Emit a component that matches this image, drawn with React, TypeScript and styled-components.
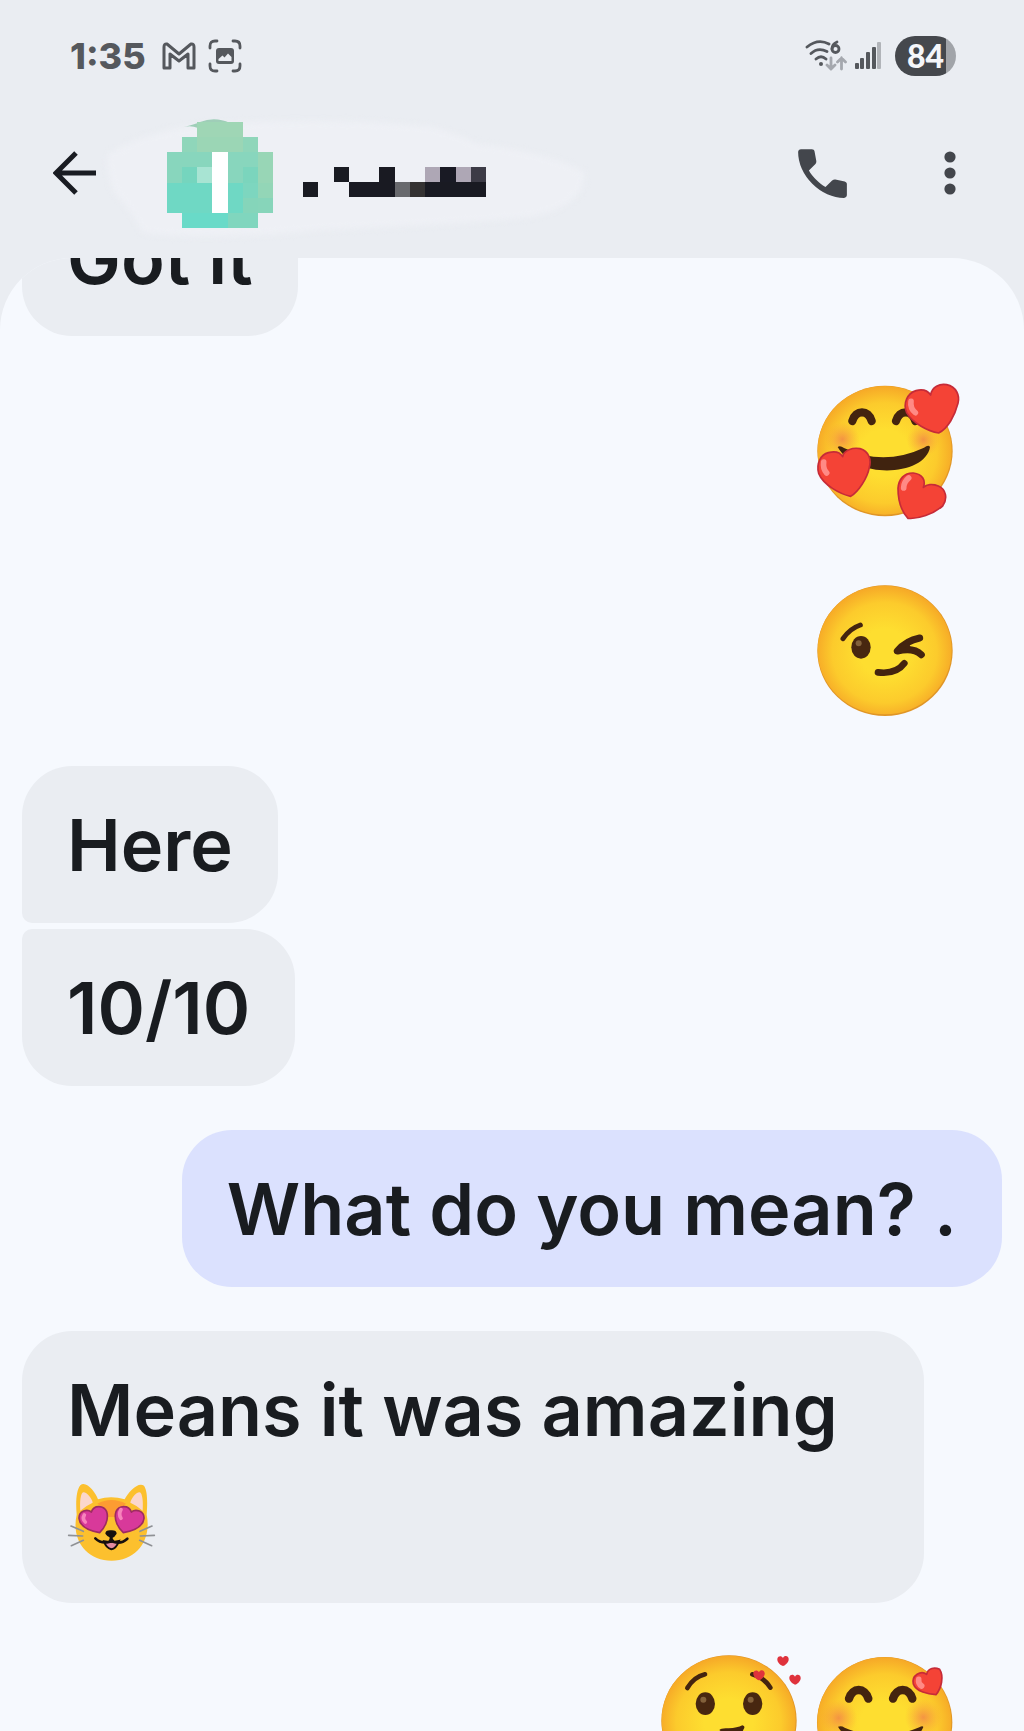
import React from "react";
import styled, { createGlobalStyle } from "styled-components";

const GlobalStyle = createGlobalStyle`
  * { box-sizing: border-box; }
  body { margin: 0; background: #eaedf2; }
`;

const Screen = styled.div`
  display: flex;
  flex-direction: column;
  height: 100vh;
  overflow: hidden;
  background: #eaedf2;
  color: #191c20;
  font-family: Inter, "Liberation Sans", sans-serif;
`;

const StatusBar = styled.div`
  display: flex;
  flex: none;
  align-items: center;
  justify-content: space-between;
  height: 112px;
  padding: 0 68px 0 70px;
  color: #55585d;
`;

const StatusGroup = styled.div<{ $gap: number }>`
  display: flex;
  align-items: center;
  gap: ${(p) => p.$gap}px;
`;

const Clock = styled.time`
  font-size: 36px;
  font-weight: 800;
  line-height: 40px;
  margin-right: 4px;
`;

const Battery = styled.span`
  display: flex;
  align-items: center;
  justify-content: center;
  width: 61px;
  height: 40px;
  margin-left: 6px;
  border-radius: 20px;
  background: linear-gradient(to right, #45484d 51px, #a1a4a9 51px);
  color: #f4f6fa;
  font-family: Lato, "Liberation Sans", sans-serif;
  font-size: 32px;
  font-weight: 900;
  line-height: 40px;
`;

const Icon = styled.svg`
  display: block;
  flex: none;
`;

const AppBar = styled.header`
  position: relative;
  display: flex;
  flex: none;
  align-items: center;
  height: 122px;
  margin-bottom: 24px;
  padding: 0 42px 0 43px;
`;

const Smudge = styled.svg`
  position: absolute;
  left: 100px;
  top: 0;
  overflow: visible;
  filter: blur(3px);
`;

const IconButton = styled.button`
  position: relative;
  display: flex;
  align-items: center;
  justify-content: center;
  width: 64px;
  height: 64px;
  padding: 0;
  border: 0;
  background: none;
  color: #43464c;
`;

const Contact = styled.div`
  position: relative;
  display: flex;
  flex: 1;
  align-items: center;
  gap: 30px;
  padding-left: 60px;
`;

const NameLine = styled.div`
  padding-top: 18px;
`;

const Actions = styled.div`
  display: flex;
  gap: 64px;
`;

const Sheet = styled.main`
  flex: 1;
  min-height: 0;
  overflow: hidden;
  border-radius: 72px 72px 0 0;
  background: #f6f9fe;
`;

const Thread = styled.div`
  display: flex;
  flex-direction: column;
  gap: 44px;
  margin-top: -79px;
  padding: 0 22px;
`;

const Group = styled.section<{ $sent?: boolean; $gap?: number }>`
  display: flex;
  flex-direction: column;
  align-items: ${(p) => (p.$sent ? "flex-end" : "flex-start")};
  gap: ${(p) => p.$gap ?? 6}px;
`;

const Bubble = styled.p<{ $sent?: boolean; $first?: boolean; $last?: boolean }>`
  max-width: 92%;
  margin: 0;
  padding: 21px 45px;
  border-radius: 50px;
  ${(p) => p.$first && "border-bottom-left-radius: 10px;"}
  ${(p) => p.$last && "border-top-left-radius: 10px;"}
  background: ${(p) => (p.$sent ? "#dbe1fe" : "#eaedf2")};
  font-size: 72px;
  font-weight: 600;
  line-height: 115px;
`;

const EmojiRow = styled.div`
  display: flex;
  padding-right: 39px;
`;

const Emoji = styled.svg`
  display: block;
  width: 155px;
  height: 142px;
`;

const InlineEmoji = styled.svg`
  width: 90px;
  height: 84px;
  vertical-align: -12px;
`;

const Defs = styled.svg`
  position: absolute;
`;

const INK = "#44240f";

function FaceGradients() {
  return (
    <Defs width="0" height="0" aria-hidden="true">
      <defs>
        <radialGradient id="face" cx="50%" cy="52%" r="52%">
          <stop offset="0.35" stopColor="#fede30" />
          <stop offset="0.75" stopColor="#fccb2c" />
          <stop offset="1" stopColor="#f6a827" />
        </radialGradient>
        <radialGradient id="blush">
          <stop offset="0" stopColor="#f07a4c" stopOpacity="0.7" />
          <stop offset="1" stopColor="#f99a3c" stopOpacity="0" />
        </radialGradient>
      </defs>
    </Defs>
  );
}

function Face({ cx, cy }: { cx: number; cy: number }) {
  return (
    <>
      <ellipse cx={cx} cy={cy} rx="203" ry="196" fill="#e09626" />
      <ellipse cx={cx - 1} cy={cy - 2} rx="201" ry="193" fill="url(#face)" />
    </>
  );
}

function Heart({ d, shine }: { d: string; shine: string }) {
  return (
    <>
      <path d={d} fill="#f44336" stroke="#c62b38" strokeWidth="5" strokeLinejoin="round" />
      <path d={shine} fill="none" stroke="#ff8a85" strokeWidth="17" strokeLinecap="round" />
    </>
  );
}

function ArchedEyes({ x, gap, y }: { x: number; gap: number; y: number }) {
  const arch = "c5-18 17-26 29-26s24 8 29 26";
  return (
    <path
      d={`M${x} ${y}${arch}M${x + gap} ${y}${arch}`}
      fill="none"
      stroke={INK}
      strokeWidth="25"
      strokeLinecap="round"
    />
  );
}

function SmilingHearts() {
  return (
    <Emoji viewBox="54 60 465 426" role="img" aria-label="Smiling face with hearts">
      <Face cx={285} cy={273} />
      <circle cx="157" cy="238" r="52" fill="url(#blush)" />
      <circle cx="400" cy="240" r="50" fill="url(#blush)" />
      <ArchedEyes x={187} gap={131} y={183} />
      <path d="M143 261Q150 255 162 264Q280 320 402 263Q416 253 420 261C408 345 204 364 143 261Z" fill="#40230f" />
      <Heart d="M422 105C425 80 450 70 470 74C500 80 510 108 504 130C495 165 475 205 446 219C415 214 368 190 350 158C338 130 352 100 378 92C400 86 415 95 422 105Z" shine="M363 124Q360 145 376 158" />
      <Heart d="M158 290C160 270 190 262 210 266C238 274 244 300 238 322C232 355 205 395 182 409C150 402 100 375 86 340C78 310 92 284 115 278C138 272 152 280 158 290Z" shine="M101 306Q98 326 110 339" />
      <Heart d="M400 382C408 362 398 342 370 339C342 338 326 358 324 385C324 420 335 455 354 475C385 478 430 462 458 438C474 415 468 388 445 378C428 371 410 373 400 382Z" shine="M356 354Q341 366 341 384" />
    </Emoji>
  );
}

function Wink() {
  return (
    <Emoji viewBox="54 60 465 426" role="img" aria-label="Winking face">
      <Face cx={285} cy={272} />
      <g fill="none" stroke={INK} strokeLinecap="round" strokeLinejoin="round">
        <path d="M159 236Q179 206 211 195" strokeWidth="15" />
        <path d="M389 234Q348 242 322 273Q370 261 394 284" strokeWidth="21" />
        <path d="M318 275L350 250L358 267Z" fill={INK} strokeWidth="12" />
        <path d="M264 337Q318 344 343 310" strokeWidth="20" />
      </g>
      <ellipse cx="213" cy="262" rx="29" ry="34" fill="#482710" />
      <circle cx="206" cy="250" r="9" fill="#83613b" />
    </Emoji>
  );
}

const TINY_HEART = "M0-7C4-17 19-14 17-1C15 9 5 16 0 17C-9 14-18 5-17-5C-14-15-4-14 0-7Z";

function FloatingHearts() {
  return (
    <Emoji viewBox="39 51 465 426" role="img" aria-label="Face with floating hearts">
      <Face cx={267} cy={272} />
      <g fill="none" stroke={INK} strokeWidth="14" strokeLinecap="round">
        <path d="M142 174Q162 141 195 133" />
        <path d="M337 133Q374 144 391 173" />
      </g>
      <ellipse cx="196" cy="221" rx="29" ry="34" fill="#482710" />
      <ellipse cx="338" cy="221" rx="29" ry="34" fill="#482710" />
      <circle cx="190" cy="209" r="9" fill="#83613b" />
      <circle cx="332" cy="209" r="9" fill="#83613b" />
      <path d="M238 300Q244 293 266 295Q292 294 307 286Q318 288 310 299Q304 316 285 329Q260 318 238 300Z" fill={INK} />
      <g fill="#df323c">
        <path d={TINY_HEART} transform="translate(429 91)" />
        <path d={TINY_HEART} transform="translate(357 134)" />
        <path d={TINY_HEART} transform="translate(465 147)" />
      </g>
    </Emoji>
  );
}

function BlushingHeart() {
  return (
    <Emoji viewBox="504 51 465 426" role="img" aria-label="Smiling face with heart">
      <Face cx={734} cy={277} />
      <circle cx="596" cy="264" r="56" fill="url(#blush)" />
      <circle cx="850" cy="262" r="56" fill="url(#blush)" />
      <ArchedEyes x={627} gap={132} y={206} />
      <path d="M594 290Q604 286 614 293Q722 340 838 292Q848 286 850 291C820 370 640 372 594 290Z" fill={INK} />
      <Heart d="M860 133C864 113 884 111 899 118C912 138 905 174 888 194C865 193 828 185 820 162C814 136 843 120 860 133Z" shine="M836 148Q834 161 845 168" />
    </Emoji>
  );
}

function HeartEyesCat() {
  return (
    <InlineEmoji viewBox="51 56 270 252" role="img" aria-label="Cat with heart eyes">
      <path d="M80 163C77 128 78 91 91 75C108 60 136 95 144 117Q183 105 224 117C235 94 265 63 282 76C294 93 292 135 290 163C306 240 258 301 185 301C110 301 63 240 80 163Z" fill="#fcc02e" />
      <g fill="none" stroke="#8f9195" strokeWidth="5" strokeLinecap="round">
        <path d="M63 197L100 213M56 225L98 227M64 256L100 240M306 197L270 213M313 225L271 227M305 256L269 240" />
      </g>
      <path d="M91 151C89 123 92 98 100 96C110 95 127 116 128 127Q110 135 91 151ZM278 151C280 123 277 98 269 96C257 96 243 116 241 127Q260 135 278 151Z" fill="#fbd7cd" />
      <path d="M142 130Q184 108 228 130Q207 145 197 170H175Q164 143 142 130Z" fill="#fd9c32" />
      <g stroke="#9e2c60" strokeWidth="5" strokeLinejoin="round" fill="#d8399a">
        <path d="M124 155C132 132 162 135 170 154C178 179 162 205 149 217C121 212 90 201 87 174C86 151 112 145 124 155Z" />
        <path d="M244 155C236 132 206 135 198 154C190 179 206 205 220 217C248 212 279 201 282 174C283 151 257 145 244 155Z" />
      </g>
      <path d="M103 164Q96 176 106 185M213 148Q205 162 213 174" fill="none" stroke="#f783bc" strokeWidth="11" strokeLinecap="round" />
      <path d="M166 220Q166 209 183 210Q200 209 200 220Q195 230 184 234Q171 229 166 220Z" fill="#17100e" />
      <path d="M162 243Q184 248 207 242Q198 266 184 267Q168 263 162 243Z" fill="#e48ba0" stroke="#17100e" strokeWidth="6" />
      <path d="M183 229Q184 242 177 245Q153 251 136 234M183 229Q184 242 192 245Q215 251 232 235" fill="none" stroke="#17100e" strokeWidth="8" strokeLinecap="round" />
    </InlineEmoji>
  );
}

function GmailIcon() {
  return (
    <Icon width="34" height="28" viewBox="0 0 34 28" fill="none" stroke="currentColor" strokeWidth="3" strokeLinejoin="round" aria-label="Gmail">
      <path d="M2 5Q2 1.5 5 2L17 12L29 2Q32 1.5 32 5V26H26V12L17 19L8 12V26H2Z" />
    </Icon>
  );
}

function CaptureIcon() {
  return (
    <Icon width="34" height="34" viewBox="0 0 34 34" fill="none" stroke="currentColor" strokeWidth="2.8" strokeLinecap="round" aria-label="Screenshot saved">
      <path d="M2 9V7Q2 2 7 2H9M25 2H27Q32 2 32 7V9M32 25V27Q32 32 27 32H25M9 32H7Q2 32 2 27V25" />
      <rect x="8" y="9" width="18" height="16" rx="3" fill="currentColor" stroke="none" />
      <path d="M10.500 22V20L14.500 16.500L16.500 18.500L20 14.500L23.500 18V22Z" fill="#eaedf2" stroke="none" />
    </Icon>
  );
}

function WifiIcon() {
  return (
    <Icon width="42" height="34" viewBox="0 0 42 34" fill="none" stroke="currentColor" strokeWidth="2.8" strokeLinecap="round" aria-label="Wi-Fi 6">
      <path d="M2 8Q13 -1 24 5M6 14.500Q13 8 22 12.500M11 20Q16 15.500 21 20" />
      <circle cx="16" cy="25" r="2" fill="currentColor" stroke="none" />
      <path d="M32 3Q27 5 27 10" />
      <circle cx="30.500" cy="10" r="3.500" />
      <path d="M26 19V30M22 26L26 30L30 26M36.500 30V19M32.500 23L36.500 19L40.500 23" stroke="#a5a8ae" />
    </Icon>
  );
}

function SignalIcon() {
  return (
    <Icon width="26" height="28" viewBox="0 0 26 28" fill="currentColor" aria-label="Signal">
      <rect x="0" y="21" width="4" height="6" rx="1" />
      <rect x="5" y="16" width="4" height="11" rx="1" />
      <rect x="11" y="10" width="4" height="17" rx="1" />
      <rect x="17" y="5" width="4" height="22" rx="1" />
      <rect x="22" y="0" width="4" height="27" rx="1" fill="#b1b4b9" />
    </Icon>
  );
}

const AVATAR_CELLS: [number, number, number, number, string][] = [
  [2, 0, 3, 1, "#9fd6b5"],
  [1, 1, 5, 1, "#8fd6ba"],
  [2, 1, 3, 1, "#9bd6b5"],
  [0, 2, 7, 2, "#88d6bd"],
  [6, 2, 1, 2, "#98d6b6"],
  [0, 4, 7, 2, "#6fd8c4"],
  [1, 3, 2, 1, "#75d5be"],
  [2, 3, 1, 1, "#a8e4d3"],
  [5, 3, 1, 1, "#7bd5bd"],
  [5, 4, 1, 1, "#7dd6bf"],
  [5, 5, 1, 1, "#85d5ba"],
  [6, 4, 1, 1, "#93d6b7"],
  [6, 5, 1, 1, "#87d5ba"],
  [1, 6, 3, 1, "#69dac8"],
  [4, 6, 2, 1, "#80d6be"],
  [3, 2, 1, 4, "#ffffff"],
];

function Avatar() {
  return (
    <Icon width="106" height="109" viewBox="0 0 106 109" role="img" aria-label="Contact picture">
      <path d="M17 8Q32 4 33 3Q48 -3 63 4V9H31Q24 6 17 8Z" fill="#9fceb8" />
      <g transform="translate(0 3) scale(15.143)" shapeRendering="crispEdges">
        {AVATAR_CELLS.map(([x, y, w, h, fill], i) => (
          <rect key={i} x={x} y={y} width={w} height={h} fill={fill} />
        ))}
      </g>
    </Icon>
  );
}

const NAME_CELLS: [number, number, number, string][] = [
  [0, 1, 1, "#191b22"],
  [2, 0, 1, "#191b22"],
  [5, 0, 1, "#191a22"],
  [8, 0, 1, "#aea7b5"],
  [9, 0, 1, "#191a24"],
  [10, 0, 1, "#aea7b5"],
  [11, 0, 1, "#3c3b46"],
  [3, 1, 9, "#191a22"],
  [6, 1, 1, "#68696d"],
  [7, 1, 1, "#343232"],
];

function HiddenName() {
  return (
    <Icon width="183" height="30" viewBox="0 0 12 2" preserveAspectRatio="none" shapeRendering="crispEdges" role="img" aria-label="Hidden contact name">
      {NAME_CELLS.map(([x, y, w, fill], i) => (
        <rect key={i} x={x} y={y} width={w} height="1" fill={fill} />
      ))}
    </Icon>
  );
}

export default function App() {
  return (
    <Screen>
      <GlobalStyle />
      <FaceGradients />
      <StatusBar>
        <StatusGroup $gap={12}>
          <Clock>1:35</Clock>
          <GmailIcon />
          <CaptureIcon />
        </StatusGroup>
        <StatusGroup $gap={8}>
          <WifiIcon />
          <SignalIcon />
          <Battery>84</Battery>
        </StatusGroup>
      </StatusBar>

      <AppBar>
        <Smudge width="500" height="130" viewBox="0 0 500 130" aria-hidden="true">
          <path d="M8 42Q40 22 95 13Q240 4 330 15Q362 22 376 32Q450 40 484 60Q488 92 432 105Q350 113 220 118Q100 130 42 120Q34 102 14 80Q6 62 8 42Z" fill="#eef0f5" />
        </Smudge>
        <IconButton aria-label="Back">
          <Icon width="44" height="44" viewBox="0 0 44 44" fill="none" stroke="#191c22" strokeWidth="5">
            <path d="M23 2L3 22L23 42M3 22H43" />
          </Icon>
        </IconButton>
        <Contact>
          <Avatar />
          <NameLine>
            <HiddenName />
          </NameLine>
        </Contact>
        <Actions>
          <IconButton aria-label="Call">
            <Icon width="65" height="65" viewBox="0 0 24 24" fill="currentColor">
              <path d="M19.950 21q-3.125 0-6.175-1.362t-5.550-3.863t-3.862-5.550T3 4.050q0-.45.3-.75t.75-.3H8.100q.35 0 .625.238t.325.562l.65 3.500q.05.4-.025.675T9.400 8.450L6.975 10.900q.5.925 1.187 1.787t1.513 1.663q.775.775 1.625 1.438T13.100 17l2.350-2.350q.225-.225.588-.337t.712-.063l3.450.7q.35.1.575.363T21 15.900v4.050q0 .45-.3.75t-.75.3" />
            </Icon>
          </IconButton>
          <IconButton aria-label="More options">
            <Icon width="12" height="44" viewBox="0 0 12 44" fill="currentColor">
              <circle cx="6" cy="6" r="5.600" />
              <circle cx="6" cy="22" r="5.600" />
              <circle cx="6" cy="38" r="5.600" />
            </Icon>
          </IconButton>
        </Actions>
      </AppBar>

      <Sheet>
        <Thread>
          <Group>
            <Bubble>Got it</Bubble>
          </Group>
          <Group $sent $gap={58}>
            <EmojiRow>
              <SmilingHearts />
            </EmojiRow>
            <EmojiRow>
              <Wink />
            </EmojiRow>
          </Group>
          <Group>
            <Bubble $first>Here</Bubble>
            <Bubble $last>10/10</Bubble>
          </Group>
          <Group $sent>
            <Bubble $sent>What do you mean? .</Bubble>
          </Group>
          <Group>
            <Bubble>
              Means it was amazing <HeartEyesCat />
            </Bubble>
          </Group>
          <Group $sent>
            <EmojiRow>
              <FloatingHearts />
              <BlushingHeart />
            </EmojiRow>
          </Group>
        </Thread>
      </Sheet>
    </Screen>
  );
}
